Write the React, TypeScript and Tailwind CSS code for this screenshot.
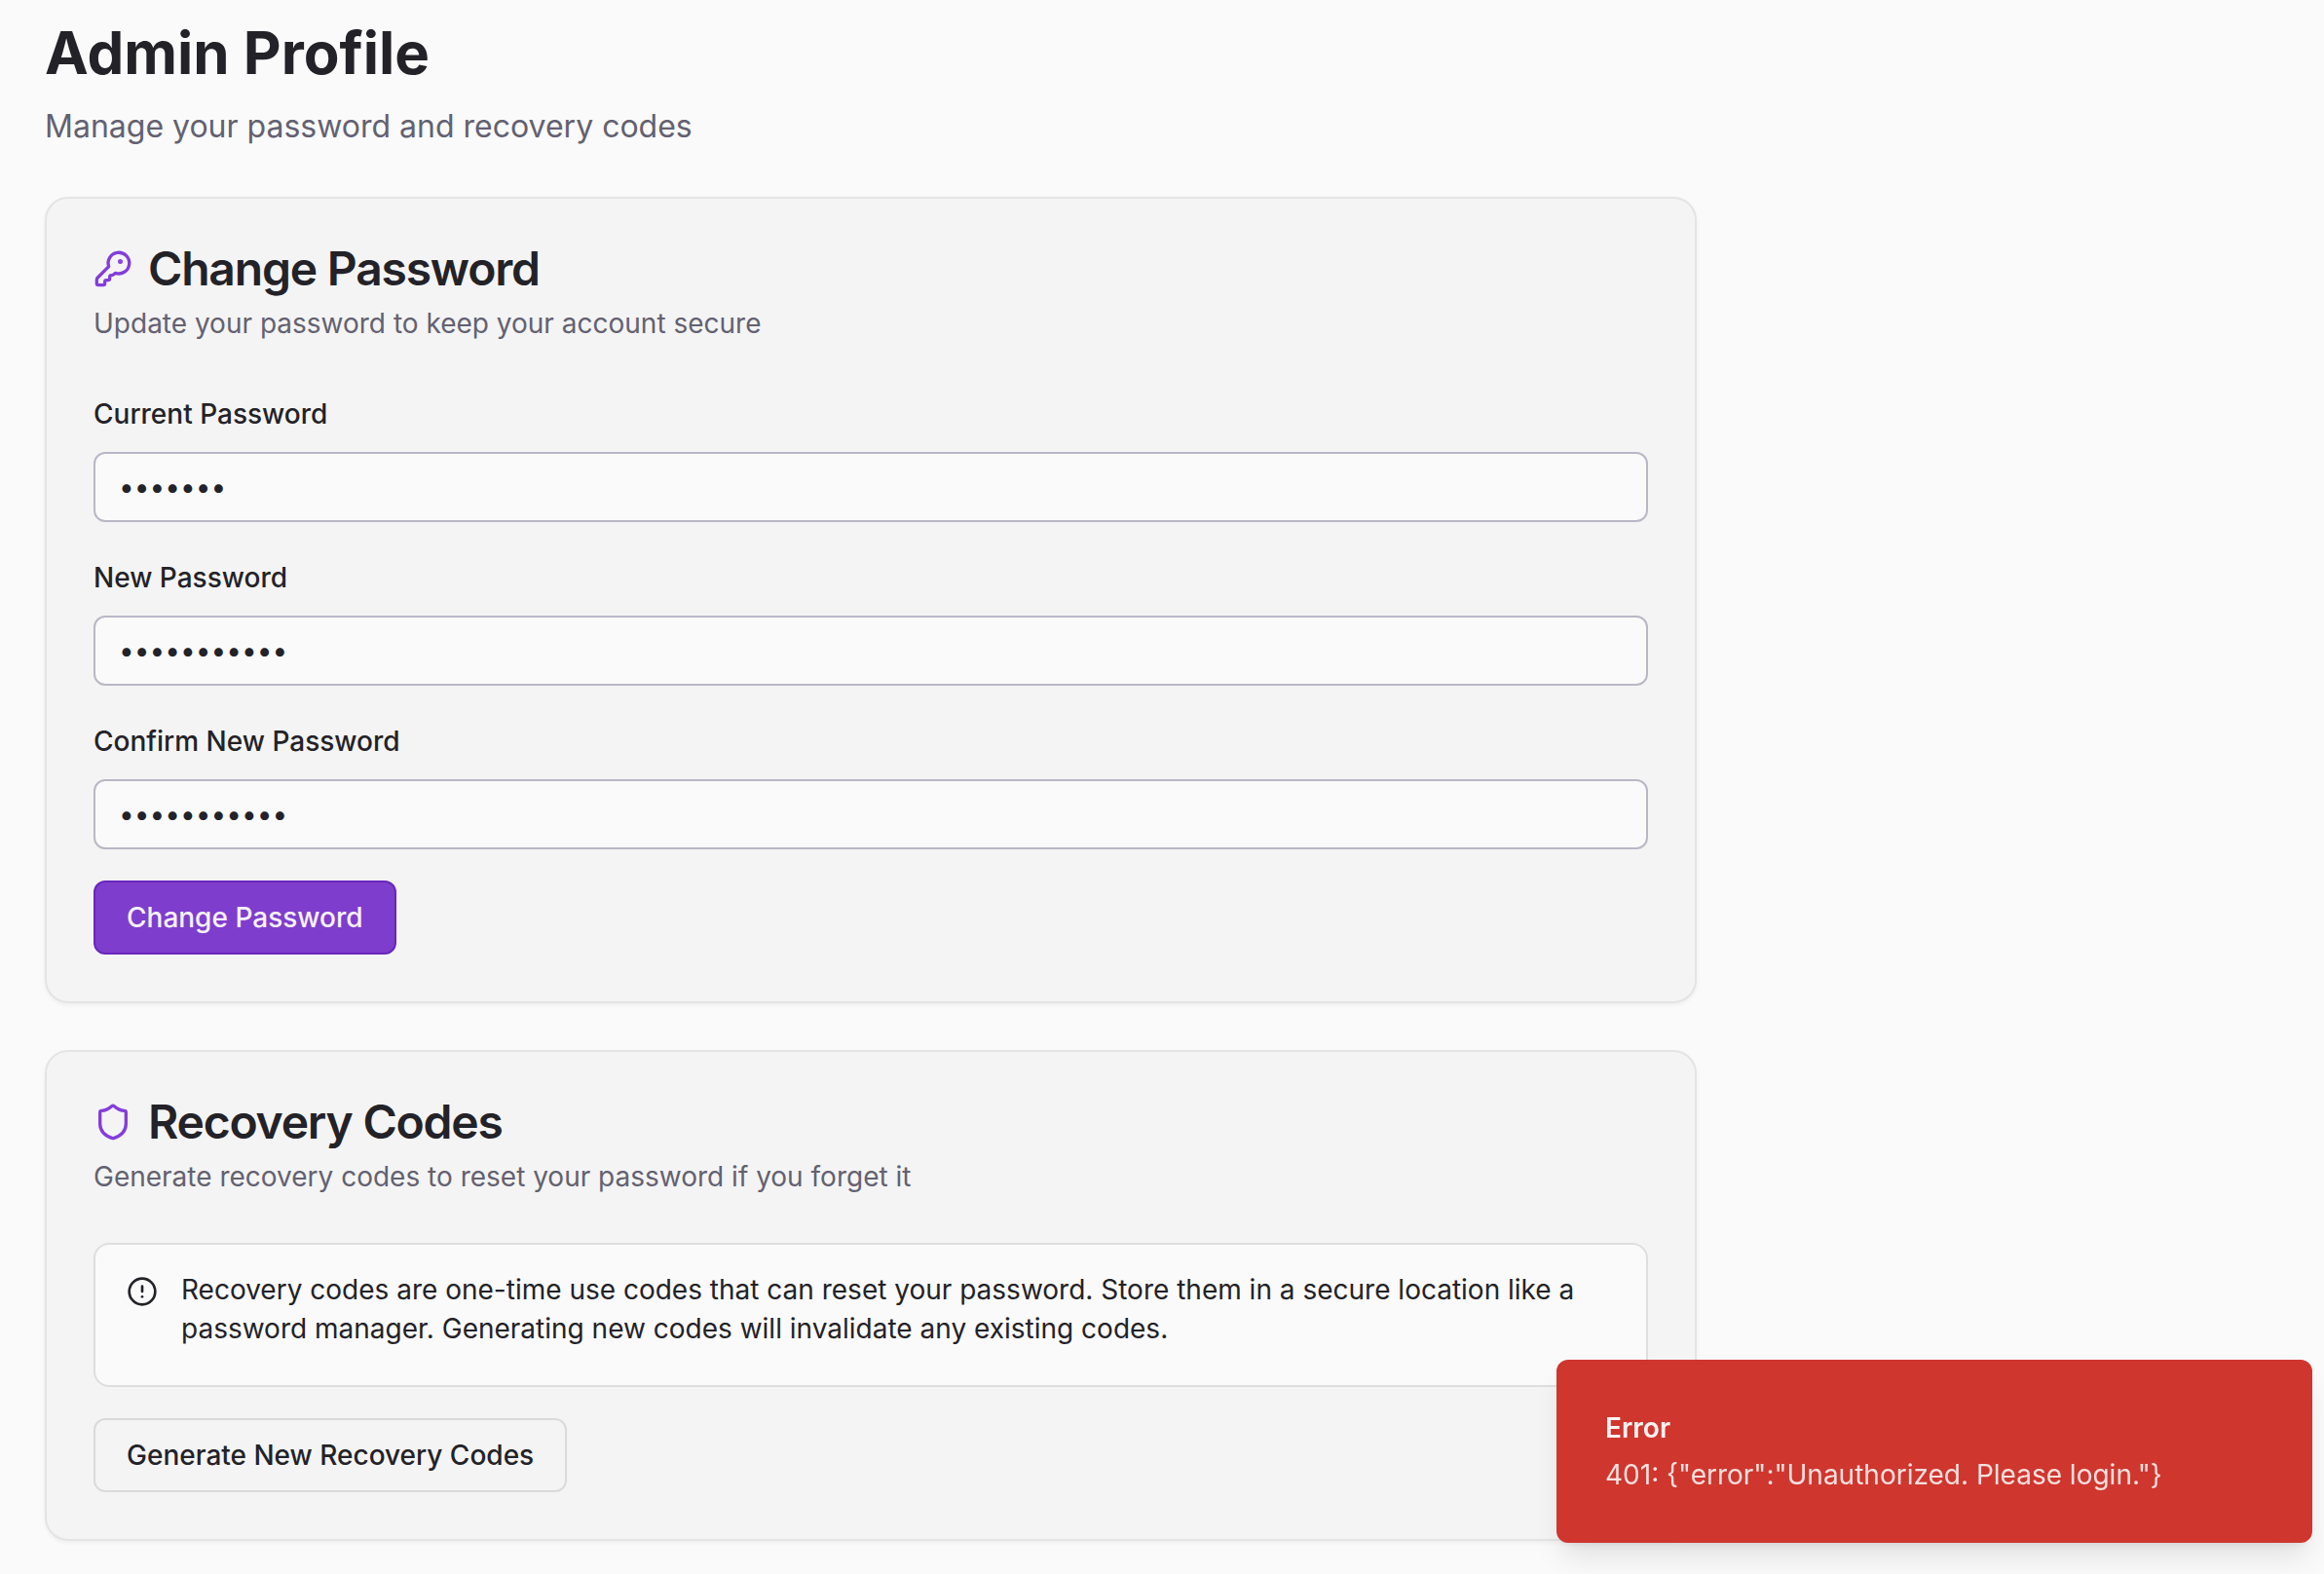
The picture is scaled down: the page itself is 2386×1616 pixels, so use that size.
import { useId, useState, type ReactNode } from "react";
import { CircleAlert, KeyRound, Shield } from "lucide-react";

function Card({ icon, title, description, children }: {
  icon: ReactNode;
  title: string;
  description: string;
  children: ReactNode;
}) {
  return (
    <section className="rounded-3xl border-2 border-[#e4e4e4] bg-[#f4f4f4] p-12 shadow-[0_2px_4px_rgba(0,0,0,0.05)]">
      <header className="flex flex-col gap-3 pb-12">
        <h2 className="flex items-center gap-4 text-5xl leading-none font-semibold tracking-tight">
          <span className="text-[#843ddb]">{icon}</span>
          {title}
        </h2>
        <p className="text-[28px] leading-10 text-[#636171]">{description}</p>
      </header>
      <div className="flex flex-col items-start gap-8">{children}</div>
    </section>
  );
}

function PasswordField({ label, initial }: { label: string; initial: string }) {
  const id = useId();
  const [value, setValue] = useState(initial);
  return (
    <div className="flex w-full flex-col gap-4">
      <div className="text-[32px] leading-12">
        <label htmlFor={id} className="text-[28px] leading-none font-medium">
          {label}
        </label>
      </div>
      <input
        id={id}
        type="password"
        value={value}
        onChange={(e) => setValue(e.target.value)}
        className="h-18 w-full rounded-xl border-2 border-[#b9b7c6] bg-[#fafafa] px-6 text-[28px] leading-10 outline-none"
      />
    </div>
  );
}

export default function App() {
  return (
    <div className="min-h-screen bg-[#fafafa] pt-[18px] font-['Inter',sans-serif] text-[#232228] antialiased [font-variation-settings:'opsz'_14]">
      <main className="flex max-w-[1790px] flex-col gap-12 pr-12 pb-8 pl-[46px]">
        <header className="flex flex-col gap-4">
          <h1 className="text-6xl leading-18 font-bold">Admin Profile</h1>
          <p className="text-[32px] leading-12 text-[#636171]">Manage your password and recovery codes</p>
        </header>

        <Card
          icon={<KeyRound className="size-10" />}
          title="Change Password"
          description="Update your password to keep your account secure"
        >
          <PasswordField label="Current Password" initial="example" />
          <PasswordField label="New Password" initial="new-example" />
          <PasswordField label="Confirm New Password" initial="new-example" />
          <button
            type="button"
            className="h-19 rounded-xl border-2 border-[#6a26bd] bg-[#7f3dcd] px-8 text-[28px] leading-10 font-medium text-[#f7f2fc]"
          >
            Change Password
          </button>
        </Card>

        <Card
          icon={<Shield className="size-10" />}
          title="Recovery Codes"
          description="Generate recovery codes to reset your password if you forget it"
        >
          <div className="flex w-full gap-6 rounded-2xl border-2 border-[#dedede] bg-[#fafafa] px-8 pt-[26px] pb-[38px]">
            <CircleAlert className="mt-1.5 size-8 shrink-0" />
            <p className="text-[28px] leading-10">
              Recovery codes are one-time use codes that can reset your password. Store them in a secure location like a
              password manager. Generating new codes will invalidate any existing codes.
            </p>
          </div>
          <button
            type="button"
            className="h-19 rounded-xl border-2 border-[#dadada] px-8 text-[28px] leading-10 font-medium"
          >
            Generate New Recovery Codes
          </button>
        </Card>
      </main>

      <div
        role="alert"
        className="fixed right-3 bottom-8 flex w-[776px] flex-col gap-2 rounded-xl border-2 border-[#cf362e] bg-[#cf362e] p-12 text-[28px] leading-10 text-[#fdf3f2] shadow-[0_20px_30px_-6px_rgba(0,0,0,0.1),0_8px_12px_-8px_rgba(0,0,0,0.1)]"
      >
        <strong className="font-semibold">Error</strong>
        <p className="opacity-90">{'401: {"error":"Unauthorized. Please login."}'}</p>
      </div>
    </div>
  );
}
